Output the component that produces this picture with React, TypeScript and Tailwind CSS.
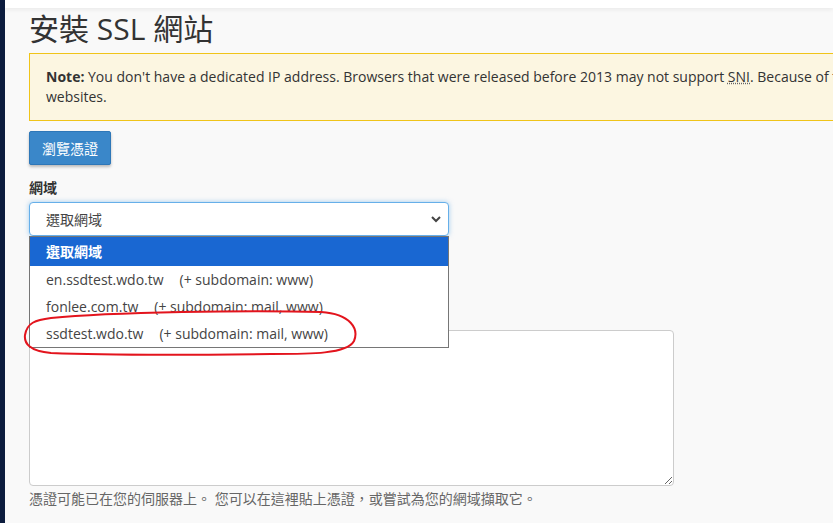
const font = {
  fontFamily: '"Open Sans", "Noto Sans CJK TC", sans-serif',
};

const options = [
  { name: "en.ssdtest.wdo.tw", sub: "(+ subdomain: www)" },
  { name: "fonlee.com.tw", sub: "(+ subdomain: mail, www)" },
  { name: "ssdtest.wdo.tw", sub: "(+ subdomain: mail, www)" },
];

const App = () => {
  return (
    <main
      className="flex h-[523px] w-[833px] overflow-hidden bg-[#f9f9f9] text-[#333]"
      style={font}
    >
      <div className="w-[5px] shrink-0 bg-[#0c1c3e]" />
      <div className="relative min-w-0 flex-1">
        <div className="h-[8px] bg-white shadow-[0_2px_4px_rgba(0,0,0,0.06)]" />
        <section className="w-[1100px] pl-[24px]">
          <h1 className="mt-[2px] text-[30px] leading-[38px] text-[#333]">安裝 SSL 網站</h1>

          <div className="mt-[5px] h-[68px] border border-[#f0c419] bg-[#fcf6e1] px-[16px] pt-[13px] text-[14px] leading-[20px] text-[#333]">
            <div className="whitespace-nowrap">
              <b>Note:</b> You don't have a dedicated IP address. Browsers that were released before 2013 may not support{" "}
              <span className="underline decoration-dotted decoration-[#666]">SNI</span>. Because of this, visitors may see warnings on your
            </div>
            <div>websites.</div>
          </div>

          <button className="mt-[10px] h-[34px] w-[82px] rounded-[2px] border border-[#2e77b8] bg-[#3a87c9] text-[14px] text-white shadow-[0_2px_3px_rgba(0,0,0,0.25)]">
            瀏覽憑證
          </button>

          <label className="mt-[13px] block text-[14px] font-bold leading-[20px]">網域</label>

          <div className="relative mt-[4px] w-[420px]">
            <div className="flex h-[34px] items-center justify-between rounded-[4px] border border-[#66afe9] bg-white pl-[16px] pr-[6px] text-[14px] text-[#444] shadow-[0_0_5px_rgba(102,175,233,0.6)]">
              <span>選取網域</span>
              <svg width="12" height="12" viewBox="0 0 12 12">
                <path d="M2 4 L6 8 L10 4" fill="none" stroke="#444" strokeWidth="2" />
              </svg>
            </div>

            <ul className="absolute left-0 top-[34px] z-10 w-[420px] border border-[#767676] bg-white text-[14px] text-[#444]">
              <li className="flex h-[29px] items-center bg-[#1967d2] pl-[16px] font-bold text-white">選取網域</li>
              {options.map((o) => (
                <li key={o.name} className="flex h-[27px] items-center whitespace-nowrap pl-[16px]">
                  <span>{o.name}</span>
                  <span className="ml-[16px]">{o.sub}</span>
                </li>
              ))}
            </ul>
          </div>

          <label className="mt-[72px] block text-[14px] font-bold leading-[20px]">憑證: (CRT)</label>
          <textarea
            readOnly
            className="mt-[2px] block h-[156px] w-[645px] rounded-[4px] border border-[#ccc] bg-white"
          />
          <p className="mt-[3px] text-[14px] leading-[20px] text-[#666]">
            憑證可能已在您的伺服器上。 您可以在這裡貼上憑證，或嘗試為您的網域擷取它。
          </p>
        </section>

        <svg
          className="pointer-events-none absolute left-[16px] top-[309px] z-20"
          width="340"
          height="48"
          viewBox="0 0 340 48"
        >
          <path
            d="M30 9 C90 3 230 1 300 3 C330 5 338 20 333 32 C326 45 290 45 250 45 C170 46 80 46 30 44 C8 42 3 34 4 26 C6 14 14 11 30 9 Z"
            fill="none"
            stroke="#e3141d"
            strokeWidth="2"
          />
        </svg>
      </div>
    </main>
  );
};

export default App;
